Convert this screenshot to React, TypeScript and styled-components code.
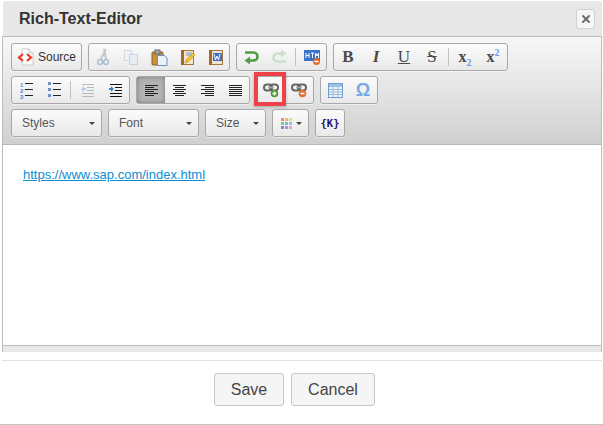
import React from "react";
import styled, { createGlobalStyle } from "styled-components";
import { X } from "lucide-react";

const GlobalStyle = createGlobalStyle`
    html, body {
        margin: 0;
        background: #fff;
        font-family: "Liberation Sans", Arial, sans-serif;
    }
`;

const Page = styled.div`
    width: 603px;
    height: 425px;
    overflow: hidden;
    box-sizing: border-box;
    display: flex;
    flex-direction: column;
    padding: 1px 1px 0 2px;
    border-bottom: 1px solid #c4c4c4;
`;

const TitleBar = styled.div`
    height: 35px;
    margin-left: 1px;
    flex: none;
    display: flex;
    align-items: center;
    justify-content: space-between;
    padding: 0 7px 0 16px;
    background: #e8e8e8;
    border-radius: 3px 3px 0 0;
`;

const Title = styled.h1`
    margin: 0;
    font-size: 16px;
    font-weight: 700;
    color: #333;
`;

const CloseButton = styled.button`
    width: 19px;
    height: 20px;
    padding: 0;
    display: flex;
    align-items: center;
    justify-content: center;
    background: #f6f6f6;
    border: 1px solid #d0d0d0;
    border-radius: 3px;
    color: #6c6c6c;
`;

const Editor = styled.div`
    height: 315px;
    flex: none;
    display: flex;
    flex-direction: column;
    border: 1px solid #bcbcbc;
    border-bottom: none;
`;

const Toolbar = styled.div`
    height: 108px;
    flex: none;
    box-sizing: border-box;
    padding: 6px 8px 0;
    display: flex;
    flex-direction: column;
    gap: 5px;
    background: linear-gradient(to bottom, #f7f7f7, #cfd1cf);
    border-bottom: 1px solid #b6b6b6;
`;

const Row = styled.div`
    display: flex;
    gap: 6px;
    height: 28px;
`;

const Group = styled.div`
    position: relative;
    display: flex;
    align-items: stretch;
    box-sizing: border-box;
    height: 28px;
    border: 1px solid #a8a8a8;
    border-radius: 3px;
    background: linear-gradient(to bottom, #fbfbfb, #e9e9e9);
    box-shadow: 0 1px 0 rgba(255, 255, 255, 0.5);
`;

const ToolButton = styled.div<{ $active?: boolean }>`
    width: 28px;
    flex: none;
    display: flex;
    align-items: center;
    justify-content: center;
    background: ${(p) => (p.$active ? "#b4b4b4" : "transparent")};
    box-shadow: ${(p) => (p.$active ? "inset 0 0 5px #777" : "none")};
`;

const Separator = styled.div`
    width: 1px;
    margin: 4px 2px;
    background: #c2c2c2;
`;

const SourceButton = styled.div`
    width: 69px;
    display: flex;
    align-items: center;
    padding-left: 5px;
    gap: 3px;
    box-sizing: border-box;
    font-size: 12px;
    color: #333;
`;

const Combo = styled(Group)<{ $width: number }>`
    width: ${(p) => p.$width}px;
    padding: 0 6px 0 10px;
    align-items: center;
    justify-content: space-between;
    font-size: 12px;
    color: #555;
`;

const Caret = styled.span`
    width: 0;
    height: 0;
    border-left: 3px solid transparent;
    border-right: 3px solid transparent;
    border-top: 3px solid #444;
`;

const ColorCombo = styled(Group)`
    width: 37px;
    padding: 0 6px 0 8px;
    align-items: center;
    justify-content: space-between;
`;

const KeyButton = styled(Group)`
    width: 30px;
    align-items: center;
    justify-content: center;
    font-family: "DejaVu Sans Mono", monospace;
    font-size: 10.5px;
    font-weight: 700;
    color: #1c0f75;
`;

const Highlight = styled.div`
    position: absolute;
    left: -3px;
    top: -5px;
    width: 24px;
    height: 26px;
    border: 4px solid #f0404a;
    box-shadow: 0 1px 3px rgba(0, 0, 0, 0.25);
    pointer-events: none;
`;

const SerifGlyph = styled.span<{ $italic?: boolean; $under?: boolean; $strike?: boolean }>`
    font-family: "Liberation Serif", serif;
    font-size: 17px;
    font-weight: ${(p) => (p.$under || p.$strike ? 400 : 700)};
    font-style: ${(p) => (p.$italic ? "italic" : "normal")};
    color: #4a4a4a;
    text-decoration: ${(p) => (p.$under ? "underline" : p.$strike ? "line-through" : "none")};
`;

const ScriptGlyph = styled.span`
    font-family: "Liberation Serif", serif;
    font-size: 16px;
    font-weight: 700;
    color: #4a4a4a;
    sub, sup {
        font-size: 10px;
        color: #6d9de8;
        line-height: 0;
    }
`;

const Omega = styled.span`
    font-family: "Liberation Sans", sans-serif;
    font-size: 18px;
    font-weight: 700;
    color: #78a8e6;
`;

const Content = styled.div`
    height: 200px;
    flex: none;
    background: #fff;
    padding: 22px 20px 0;
    box-sizing: border-box;
    font-size: 13px;
    line-height: 15px;
`;

const Link = styled.a`
    color: #0b8ecf;
    text-decoration: underline;
`;

const ResizeBar = styled.div`
    flex: 1;
    background: #e8e8e8;
    border-top: 1px solid #bcbcbc;
`;

const Footer = styled.div`
    margin-top: 8px;
    border-top: 1px solid #e2e2e2;
    padding: 12px 15px 0 0;
    display: flex;
    justify-content: center;
    gap: 7px;
`;

const FooterButton = styled.button<{ $width: number }>`
    width: ${(p) => p.$width}px;
    height: 33px;
    padding: 0;
    background: #f5f5f5;
    border: 1px solid #c6c6c6;
    border-radius: 3px;
    font-family: "Liberation Sans", Arial, sans-serif;
    font-size: 16px;
    color: #444;
`;

const SourceIcon = () => (
    <svg width="18" height="18" viewBox="0 0 18 18">
        <path d="M5 1h7l4 4v12H5z" fill="#fff" stroke="#c9c9c9" />
        <path d="M12 1v4h4" fill="#eee" stroke="#c9c9c9" />
        <path d="M6 6 2 9.500l4 3.500M10 6l4 3.500-4 3.500" fill="none" stroke="#e8392b" strokeWidth="2.2" />
    </svg>
);

const CutIcon = () => (
    <svg width="12" height="18" viewBox="0 0 12 18" fill="none" stroke="#a9bfd6" strokeWidth="1.5">
        <path d="M9 1 4 11M7 1l2 10" stroke="#c5c9cd" strokeWidth="2" />
        <circle cx="3" cy="14" r="2.400" />
        <circle cx="9" cy="14" r="2.400" />
    </svg>
);

const CopyIcon = () => (
    <svg width="16" height="16" viewBox="0 0 16 16">
        <path d="M1.500 1.500h7v10h-7z" fill="#eef2f6" stroke="#d0d6dd" />
        <path d="M6.500 5.500h8v10h-8z" fill="#e6edf5" stroke="#c6d2e0" />
    </svg>
);

const PasteIcon = () => (
    <svg width="17" height="17" viewBox="0 0 17 17">
        <rect x="1" y="3" width="11" height="13" rx="1" fill="#c98f3d" stroke="#8a5f25" />
        <rect x="4" y="1" width="5" height="4" fill="#a8a8a8" stroke="#666" />
        <path d="M6.500 6.500h7l2.500 2.500v7.500H6.500z" fill="#eaf1fa" stroke="#6b8fc0" />
    </svg>
);

const TextPasteIcon = () => (
    <svg width="15" height="16" viewBox="0 0 15 16">
        <rect x="1.500" y="1.500" width="12" height="14" fill="#f4e6c8" stroke="#a5773a" />
        <path d="M1 1h3v15H1z" fill="#a5672c" />
        <path d="M6 4h6M6 6h6" stroke="#7a9ac4" />
        <path d="m5 14 1-3 7-7 2 2-7 7z" fill="#f2c230" stroke="#b08a1c" strokeWidth=".6" />
    </svg>
);

const WordIcon = () => (
    <svg width="15" height="16" viewBox="0 0 15 16">
        <rect x="1.500" y="1.500" width="13" height="14" fill="#efe4d2" stroke="#a5773a" />
        <path d="M1 1h3v15H1z" fill="#a5672c" />
        <rect x="5" y="4" width="9" height="8" fill="#3f6fc4" />
        <path d="m6 5 1.500 6 1.500-4 1.500 4L12 5" fill="none" stroke="#fff" />
    </svg>
);

const UndoIcon = ({ redo }: { redo?: boolean }) => (
    <svg width="15" height="14" viewBox="0 0 15 14" style={{ transform: redo ? "rotate(180deg)" : undefined }}>
        <path
            d="M1 2.500h8.500a4 4 0 0 1 0 8H5"
            fill="none"
            stroke={redo ? "#c9e0cc" : "#4d9e3f"}
            strokeWidth="2.600"
        />
        <path d="M6 6.500v8l-5.500-4z" fill={redo ? "#c9e0cc" : "#4d9e3f"} />
    </svg>
);

const HtmlIcon = () => (
    <svg width="17" height="17" viewBox="0 0 17 17">
        <rect x="0" y="1" width="16" height="11" fill="#3a72c9" />
        <path d="M2 4v5M5 4v5M2 6.500h3M7 4h3M8.500 4v5M11.500 9V4l1.500 3 1.500-3v5" stroke="#fff" fill="none" />
        <circle cx="12.500" cy="12.500" r="3.500" fill="#e8692a" />
        <path d="M10.500 12.500h4" stroke="#fff" strokeWidth="1.500" />
    </svg>
);

const LineIcon = ({ variant }: { variant: "left" | "center" | "right" | "justify" }) => {
    const rows = [13, 9, 13, 9, 13, 9];
    return (
        <svg width="13" height="12" viewBox="0 0 13 12">
            {rows.map((w, i) => {
                const width = variant === "justify" ? 13 : w;
                const x = variant === "left" || variant === "justify" ? 0 : variant === "center" ? (13 - width) / 2 : 13 - width;
                return <rect key={i} x={x} y={i * 2 + 1} width={width} height="1" fill="#222" />;
            })}
        </svg>
    );
};

const ListIcon = ({ numbered }: { numbered?: boolean }) => (
    <svg width="13" height="17" viewBox="0 0 13 17">
        {[1, 7, 13].map((y, i) => (
            <React.Fragment key={y}>
                <rect x="5" y={y} width="8" height="1" fill="#222" />
                {numbered ? (
                    <text x="0" y={y + 3.5} fontFamily="Liberation Sans, sans-serif" fontSize="6" fontWeight="700" fill="#4a86d8">
                        {i + 1}
                    </text>
                ) : (
                    <rect x="0" y={y - 1} width="3" height="3" fill="#6b93cf" />
                )}
            </React.Fragment>
        ))}
    </svg>
);

const IndentIcon = ({ faded }: { faded?: boolean }) => {
    const line = faded ? "#b8b8b8" : "#111";
    const arrow = faded ? "#b5cde8" : "#2f83d8";
    return (
        <svg width="13" height="13" viewBox="0 0 13 13">
            <rect x="1" y="0" width="12" height="1" fill={line} />
            <rect x="6" y="3" width="7" height="1" fill={line} />
            <rect x="6" y="6" width="7" height="1" fill={line} />
            <rect x="1" y="9" width="12" height="1" fill={line} />
            <rect x="1" y="12" width="12" height="1" fill={line} />
            <path d={faded ? "M0 5l3-3v2h2v2H3v2z" : "M5 5L2 2v2H0v2h2v2z"} fill={arrow} />
        </svg>
    );
};

const LinkIcon = ({ remove }: { remove?: boolean }) => (
    <svg width="16" height="15" viewBox="0 0 16 15">
        <rect x="1" y="1.500" width="8" height="6" rx="3" fill="none" stroke="#666" strokeWidth="2" />
        <rect x="7" y="1.500" width="8" height="6" rx="3" fill="none" stroke="#666" strokeWidth="2" />
        <path d="M5 4.500h6" stroke="#aaa" strokeWidth="1.500" />
        <circle cx="11.500" cy="10.500" r="3.800" fill={remove ? "#e2702f" : "#4c9a3b"} />
        <path d={remove ? "M9.500 10.500h4" : "M9.500 10.500h4M11.500 8.500v4"} stroke="#fff" strokeWidth="1.500" />
    </svg>
);

const TableIcon = () => (
    <svg width="15" height="15" viewBox="0 0 15 15">
        <rect x=".5" y=".5" width="14" height="14" fill="#eef4fb" stroke="#6f9bd3" />
        <rect x="1" y="1" width="13" height="3" fill="#9ec0e8" />
        <path d="M1 6.500h13M1 9h13M1 11.500h13M5 4v10M10 4v10" stroke="#9db9d8" />
    </svg>
);

const ColorIcon = () => {
    const colors = ["#ef8f8f", "#f5b274", "#f4d57a", "#8cc98a", "#71c4c9", "#86c8ea", "#7a8fbe", "#b68fd4", "#ef9fd4"];
    return (
        <svg width="11" height="11" viewBox="0 0 11 11">
            {colors.map((c, i) => (
                <rect key={c} x={(i % 3) * 4} y={Math.floor(i / 3) * 4} width="3" height="3" fill={c} />
            ))}
        </svg>
    );
};

export default function App() {
    return (
        <Page>
            <GlobalStyle />
            <TitleBar>
                <Title>Rich-Text-Editor</Title>
                <CloseButton>
                    <X size={12} strokeWidth={4} />
                </CloseButton>
            </TitleBar>
            <Editor>
                <Toolbar>
                    <Row>
                        <Group>
                            <SourceButton>
                                <SourceIcon />
                                Source
                            </SourceButton>
                        </Group>
                        <Group>
                            <ToolButton><CutIcon /></ToolButton>
                            <ToolButton><CopyIcon /></ToolButton>
                            <ToolButton><PasteIcon /></ToolButton>
                            <ToolButton><TextPasteIcon /></ToolButton>
                            <ToolButton><WordIcon /></ToolButton>
                        </Group>
                        <Group>
                            <ToolButton><UndoIcon /></ToolButton>
                            <ToolButton><UndoIcon redo /></ToolButton>
                            <Separator />
                            <ToolButton><HtmlIcon /></ToolButton>
                        </Group>
                        <Group>
                            <ToolButton><SerifGlyph>B</SerifGlyph></ToolButton>
                            <ToolButton><SerifGlyph $italic>I</SerifGlyph></ToolButton>
                            <ToolButton><SerifGlyph $under>U</SerifGlyph></ToolButton>
                            <ToolButton><SerifGlyph $strike>S</SerifGlyph></ToolButton>
                            <Separator />
                            <ToolButton><ScriptGlyph>x<sub>2</sub></ScriptGlyph></ToolButton>
                            <ToolButton><ScriptGlyph>x<sup>2</sup></ScriptGlyph></ToolButton>
                        </Group>
                    </Row>
                    <Row>
                        <Group>
                            <ToolButton><ListIcon numbered /></ToolButton>
                            <ToolButton><ListIcon /></ToolButton>
                            <Separator />
                            <ToolButton><IndentIcon faded /></ToolButton>
                            <ToolButton><IndentIcon /></ToolButton>
                        </Group>
                        <Group>
                            <ToolButton $active><LineIcon variant="left" /></ToolButton>
                            <ToolButton><LineIcon variant="center" /></ToolButton>
                            <ToolButton><LineIcon variant="right" /></ToolButton>
                            <ToolButton><LineIcon variant="justify" /></ToolButton>
                        </Group>
                        <Group>
                            <ToolButton><LinkIcon /></ToolButton>
                            <ToolButton><LinkIcon remove /></ToolButton>
                            <Highlight />
                        </Group>
                        <Group>
                            <ToolButton><TableIcon /></ToolButton>
                            <ToolButton><Omega>Ω</Omega></ToolButton>
                        </Group>
                    </Row>
                    <Row>
                        <Combo $width={91}>Styles<Caret /></Combo>
                        <Combo $width={91}>Font<Caret /></Combo>
                        <Combo $width={61}>Size<Caret /></Combo>
                        <ColorCombo><ColorIcon /><Caret /></ColorCombo>
                        <KeyButton>{"{K}"}</KeyButton>
                    </Row>
                </Toolbar>
                <Content>
                    <Link href="#">https://www.sap.com/index.html</Link>
                </Content>
                <ResizeBar />
            </Editor>
            <Footer>
                <FooterButton $width={70}>Save</FooterButton>
                <FooterButton $width={84}>Cancel</FooterButton>
            </Footer>
        </Page>
    );
}
